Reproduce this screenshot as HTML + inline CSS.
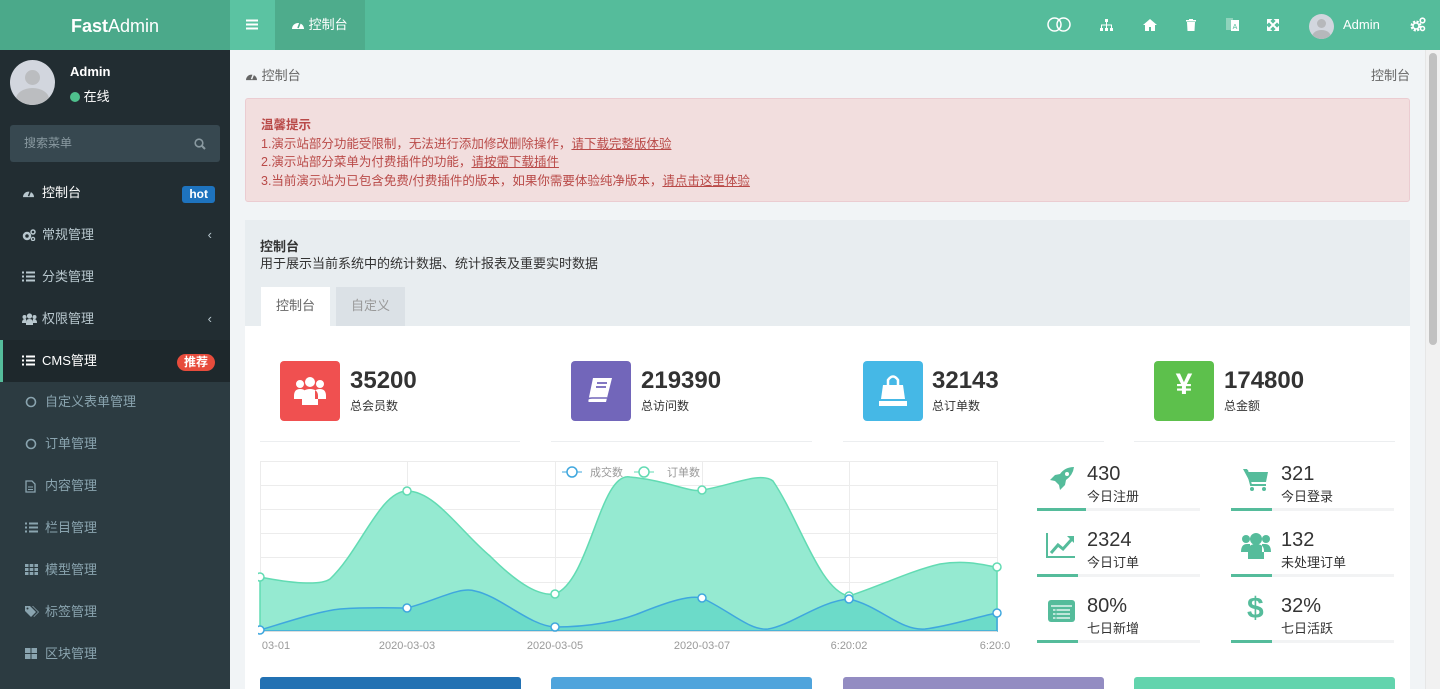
<!DOCTYPE html>
<html><head><meta charset="utf-8"><style>
*{margin:0;padding:0;box-sizing:border-box}
body{width:1440px;height:689px;overflow:hidden;background:#f1f4f6;font-family:"Liberation Sans","Noto Sans CJK SC",sans-serif;font-size:13px;color:#333;position:relative}
.a{position:absolute}
.hdr{left:0;top:0;width:1440px;height:50px;background:#55bc9b}
.logo{left:0;top:0;width:230px;height:50px;background:#4ba98a;color:#fff;font-size:18px;text-align:center;line-height:52px}
.side{left:0;top:50px;width:230px;height:639px;background:#222d32}
.sub{left:0;top:381px;width:230px;height:308px;background:#2c3b41}
.mi{position:absolute;left:0;width:230px;height:42px;line-height:42px;color:#b8c7ce;font-size:13px}
.mi svg{position:absolute;left:22px;top:15px}
.mi .t{position:absolute;left:42px}
.si{color:#8aa4af}
.si svg{left:25px}
.si .t{left:45px}
.badge{position:absolute;right:15px;top:13px;height:17px;line-height:17px;padding:0 7px;border-radius:3px;color:#fff;font-size:12px;font-weight:bold}
.card .n{position:absolute;font-size:24px;font-weight:bold;color:#333}
.card .l{position:absolute;font-size:12px;color:#333}
.box{position:absolute;width:60px;height:60px;border-radius:4px}
.ul{position:absolute;height:1px;background:#eceef0;top:441px}
.sm .n{position:absolute;font-size:20px;color:#333}
.sm .l{position:absolute;font-size:13px;color:#333}
.ln{position:absolute;height:3px;background:#f2f3f4;width:163px}
.ln i{display:block;height:3px;background:#55bc9b;width:49px}
</style></head><body>
<div class="a hdr"></div>
<div class="a logo"><b>Fast</b><span style="font-weight:300">Admin</span></div>
<div class="a" style="left:230px;top:0;width:45px;height:50px;background:#5bc3a2"><svg class="a" style="left:16px;top:19px" width="12" height="11"><path d="M0 1.5h12M0 5.5h12M0 9.5h12" stroke="#fff" stroke-width="2"/></svg></div>
<div class="a" style="left:275px;top:0;width:90px;height:50px;background:#4eac8c;color:#fff;line-height:50px;padding-left:16px;font-size:13px"><svg width="14" height="12" viewBox="0 0 14 12" style="vertical-align:-1px"><path d="M1 11 A6 6 0 1 1 13 11 Z" fill="#fff"/><path d="M7 10 L9 5" stroke="#4eac8c" stroke-width="1.6"/></svg> 控制台</div>
<!-- header icons -->
<svg class="a" style="left:1047px;top:17px" width="24" height="15"><circle cx="7.5" cy="7.5" r="6.5" fill="none" stroke="#fff" stroke-width="1.5"/><circle cx="16.5" cy="7.5" r="6.5" fill="none" stroke="#fff" stroke-width="1.5"/></svg>
<svg class="a" style="left:1100px;top:19px" width="13" height="12"><rect x="5" y="0" width="3" height="3" fill="#fff"/><rect x="0" y="9" width="3" height="3" fill="#fff"/><rect x="5" y="9" width="3" height="3" fill="#fff"/><rect x="10" y="9" width="3" height="3" fill="#fff"/><path d="M6.5 3v6M1.5 9V6h10v3" stroke="#fff" fill="none"/></svg>
<svg class="a" style="left:1143px;top:19px" width="14" height="12"><path d="M7 0L0 6h2v6h4V8h2v4h4V6h2z" fill="#fff"/></svg>
<svg class="a" style="left:1186px;top:19px" width="10" height="12"><path d="M0 1h10v1.5H0zM3 0h4v1H3zM1 3h8l-.5 9h-7z" fill="#fff"/></svg>
<svg class="a" style="left:1226px;top:18px" width="13" height="13"><rect x="0" y="0" width="7" height="12" fill="#8fd3bc"/><rect x="5" y="2" width="8" height="11" fill="#fff"/><text x="9" y="11" font-size="7" fill="#55bc9b" text-anchor="middle" font-family="Liberation Sans">A</text></svg>
<svg class="a" style="left:1267px;top:19px" width="12" height="12"><path d="M0 0h4L0 4zM12 0v4L8 0zM0 12V8l4 4zM12 12H8l4-4zM2 2l8 8M10 2l-8 8" stroke="#fff" stroke-width="2" fill="#fff"/></svg>
<div class="a" style="left:1309px;top:14px;width:25px;height:25px;border-radius:50%;background:#d2d6de;overflow:hidden"><div class="a" style="left:8px;top:5px;width:9px;height:9px;border-radius:50%;background:#b6b8bb"></div><div class="a" style="left:3px;top:16px;width:19px;height:14px;border-radius:50%;background:#b6b8bb"></div></div>
<div class="a" style="left:1343px;top:17px;color:#fff;font-size:13px">Admin</div>
<svg class="a" style="left:1410px;top:17px" width="16" height="15"><circle cx="6" cy="9" r="4" fill="none" stroke="#fff" stroke-width="3" stroke-dasharray="2 1.2"/><circle cx="6" cy="9" r="3" fill="none" stroke="#fff" stroke-width="1.5"/><circle cx="12.5" cy="3.5" r="2.3" fill="none" stroke="#fff" stroke-width="1.6"/><circle cx="12.5" cy="11.5" r="2" fill="none" stroke="#fff" stroke-width="1.5"/></svg>
<!-- sidebar -->
<div class="a side"></div>
<div class="a sub"></div>
<div class="a" style="left:10px;top:60px;width:45px;height:45px;border-radius:50%;background:#d2d6de;overflow:hidden"><div class="a" style="left:15px;top:10px;width:15px;height:15px;border-radius:50%;background:#bbbdc0"></div><div class="a" style="left:6px;top:28px;width:33px;height:22px;border-radius:50%;background:#bbbdc0"></div></div>
<div class="a" style="left:70px;top:64px;color:#fff;font-weight:bold;font-size:13px">Admin</div>
<div class="a" style="left:70px;top:86px;color:#fff;font-size:13px"><span style="display:inline-block;width:10px;height:10px;border-radius:50%;background:#4fc08d;vertical-align:-1px"></span> 在线</div>
<div class="a" style="left:10px;top:125px;width:210px;height:37px;background:#374850;border-radius:3px;color:#8a9aa1;line-height:37px;padding-left:14px;font-size:12px">搜索菜单<svg class="a" style="right:14px;top:13px" width="12" height="12"><circle cx="5" cy="5" r="3.8" fill="none" stroke="#8a9aa1" stroke-width="1.6"/><path d="M8 8l3 3" stroke="#8a9aa1" stroke-width="2"/></svg></div>
<div class="mi" style="top:172px"><svg width="13" height="11" viewBox="0 0 14 12"><path d="M1 11 A6 6 0 1 1 13 11 Z" fill="#b8c7ce"/><path d="M7 10 L9 5" stroke="#222d32" stroke-width="1.6"/></svg><span class="t" style="color:#fff">控制台</span><span class="badge" style="background:#1e73be;top:14px">hot</span></div>
<div class="mi" style="top:214px"><svg width="14" height="12"><circle cx="5" cy="7" r="3" fill="none" stroke="#b8c7ce" stroke-width="2.5"/><circle cx="11" cy="3" r="2" fill="none" stroke="#b8c7ce" stroke-width="1.5"/><circle cx="11" cy="10" r="1.6" fill="none" stroke="#b8c7ce" stroke-width="1.3"/></svg><span class="t">常规管理</span><span style="position:absolute;right:18px">‹</span></div>
<div class="mi" style="top:256px"><svg width="13" height="11"><path d="M0 1.5h2M4 1.5h9M0 5.5h2M4 5.5h9M0 9.5h2M4 9.5h9" stroke="#b8c7ce" stroke-width="2"/></svg><span class="t">分类管理</span></div>
<div class="mi" style="top:298px"><svg width="15" height="12"><circle cx="7.5" cy="3" r="2.6" fill="#b8c7ce"/><circle cx="2.5" cy="4" r="2" fill="#b8c7ce"/><circle cx="12.5" cy="4" r="2" fill="#b8c7ce"/><path d="M0 10q0-4 3-4h1v4zM15 10q0-4-3-4h-1v4zM4 12v-3q0-3 3.5-3t3.5 3v3z" fill="#b8c7ce"/></svg><span class="t">权限管理</span><span style="position:absolute;right:18px">‹</span></div>
<div class="mi" style="top:340px;background:#1e282c;border-left:3px solid #55bc9b;color:#fff"><svg width="13" height="11" style="left:19px"><path d="M0 1.5h2M4 1.5h9M0 5.5h2M4 5.5h9M0 9.5h2M4 9.5h9" stroke="#fff" stroke-width="2"/></svg><span class="t" style="left:39px">CMS管理</span><span class="badge" style="background:#e74c3c;border-radius:9px;top:14px">推荐</span></div>
<div class="mi si" style="top:381px"><svg width="12" height="12"><circle cx="6" cy="6" r="4.5" fill="none" stroke="#8aa4af" stroke-width="1.6"/></svg><span class="t">自定义表单管理</span></div>
<div class="mi si" style="top:423px"><svg width="12" height="12"><circle cx="6" cy="6" r="4.5" fill="none" stroke="#8aa4af" stroke-width="1.6"/></svg><span class="t">订单管理</span></div>
<div class="mi si" style="top:465px"><svg width="11" height="13"><path d="M1 1h6l3 3v8H1z" fill="none" stroke="#8aa4af" stroke-width="1.3"/><path d="M3 7h5M3 9.5h5" stroke="#8aa4af"/></svg><span class="t">内容管理</span></div>
<div class="mi si" style="top:507px"><svg width="13" height="11"><path d="M0 1.5h2M4 1.5h9M0 5.5h2M4 5.5h9M0 9.5h2M4 9.5h9" stroke="#8aa4af" stroke-width="2"/></svg><span class="t">栏目管理</span></div>
<div class="mi si" style="top:549px"><svg width="13" height="11"><path d="M0 0h3.5v3H0zM4.7 0h3.6v3H4.7zM9.5 0H13v3H9.5zM0 4h3.5v3H0zM4.7 4h3.6v3H4.7zM9.5 4H13v3H9.5zM0 8h3.5v3H0zM4.7 8h3.6v3H4.7zM9.5 8H13v3H9.5z" fill="#8aa4af"/></svg><span class="t">模型管理</span></div>
<div class="mi si" style="top:591px"><svg width="14" height="12"><path d="M0 0h5l6 6-5 5-6-6z" fill="#8aa4af"/><path d="M7 0h1l6 6-5 5-.5-.5L13 6z" fill="#8aa4af"/><circle cx="2.5" cy="2.5" r="1" fill="#2c3b41"/></svg><span class="t">标签管理</span></div>
<div class="mi si" style="top:633px"><svg width="12" height="11"><path d="M0 0h5.5v5H0zM6.5 0H12v5H6.5zM0 6h5.5v5H0zM6.5 6H12v5H6.5z" fill="#8aa4af"/></svg><span class="t">区块管理</span></div>
<!-- scrollbar -->
<div class="a" style="left:1425px;top:50px;width:15px;height:639px;background:#f1f1f1;border-left:1px solid #e6e6e6"></div>
<div class="a" style="left:1429px;top:53px;width:8px;height:292px;background:#c1c1c1;border-radius:4px"></div>
<!-- breadcrumb -->
<div class="a" style="left:245px;top:65px;color:#666;font-size:13px"><svg width="13" height="11" viewBox="0 0 14 12" style="vertical-align:-1px"><path d="M1 11 A6 6 0 1 1 13 11 Z" fill="#666"/><path d="M7 10 L9 5" stroke="#f1f4f6" stroke-width="1.6"/></svg> 控制台</div>
<div class="a" style="left:1371px;top:65px;color:#666;font-size:13px">控制台</div>
<!-- alert -->
<div class="a" style="left:245px;top:98px;width:1165px;height:104px;background:#f2dede;border:1px solid #ebccd1;border-radius:3px;color:#b94a48;padding:17px 15px;font-size:12.5px;line-height:18.5px">
<b>温馨提示</b><br>1.演示站部分功能受限制，无法进行添加修改删除操作，<u>请下载完整版体验</u><br>2.演示站部分菜单为付费插件的功能，<u>请按需下载插件</u><br>3.当前演示站为已包含免费/付费插件的版本，如果你需要体验纯净版本，<u>请点击这里体验</u></div>
<!-- panel -->
<div class="a" style="left:245px;top:220px;width:1165px;height:469px;background:#fff"></div>
<div class="a" style="left:245px;top:220px;width:1165px;height:106px;background:#e8edf0"></div>
<div class="a" style="left:260px;top:236px;font-weight:bold;font-size:13px">控制台</div>
<div class="a" style="left:260px;top:253px;font-size:13px">用于展示当前系统中的统计数据、统计报表及重要实时数据</div>
<div class="a" style="left:261px;top:287px;width:69px;height:39px;background:#fff;color:#666;text-align:center;line-height:38px">控制台</div>
<div class="a" style="left:336px;top:287px;width:69px;height:39px;background:#dbe1e6;color:#999;text-align:center;line-height:38px">自定义</div>
<!-- cards -->
<div class="card">
<div class="box" style="left:280px;top:361px;background:#f05050"></div>
<svg class="a" style="left:294px;top:376px" width="32" height="30"><circle cx="16" cy="6" r="5" fill="#fff"/><circle cx="6" cy="8" r="4" fill="#fff"/><circle cx="26" cy="8" r="4" fill="#fff"/><path d="M0 20q0-7 6-7q4 0 5 2v8H0zM32 20q0-7-6-7q-4 0-5 2v8h11zM8 29v-9q0-7 8-7t8 7v9z" fill="#fff"/></svg>
<div class="n" style="left:350px;top:367px">35200</div><div class="l" style="left:350px;top:397px">总会员数</div>
<div class="box" style="left:571px;top:361px;background:#7266ba"></div>
<svg class="a" style="left:586px;top:377px" width="30" height="28"><path d="M7 1h19l-6 24H2z" fill="#fff"/><path d="M2 25q-2-4 4-4h15" stroke="#7266ba" stroke-width="1.5" fill="none"/><path d="M11 6h10M10 10h10" stroke="#7266ba" stroke-width="1.8"/></svg>
<div class="n" style="left:641px;top:367px">219390</div><div class="l" style="left:641px;top:397px">总访问数</div>
<div class="box" style="left:863px;top:361px;background:#45b8e6"></div>
<svg class="a" style="left:877px;top:373px" width="32" height="34"><path d="M11 12V7q5-7 10 0v5" stroke="#fff" stroke-width="2.5" fill="none"/><path d="M6 12h20l2 14H4z" fill="#fff"/><rect x="2" y="28" width="28" height="5" fill="#fff"/></svg>
<div class="n" style="left:932px;top:367px">32143</div><div class="l" style="left:932px;top:397px">总订单数</div>
<div class="box" style="left:1154px;top:361px;background:#5dc04c"></div>
<div class="a" style="left:1154px;top:368px;width:60px;text-align:center;color:#fff;font-size:30px;font-weight:bold">¥</div>
<div class="n" style="left:1224px;top:367px">174800</div><div class="l" style="left:1224px;top:397px">总金额</div>
</div>
<div class="ul" style="left:260px;width:260px"></div><div class="ul" style="left:551px;width:261px"></div><div class="ul" style="left:843px;width:261px"></div><div class="ul" style="left:1134px;width:261px"></div>
<!-- chart -->
<svg class="a" style="left:258px;top:461px" width="752" height="195" font-family="Liberation Sans" font-size="11">
<g transform="translate(2,0)">
<g stroke="#ececec" stroke-width="1"><path d="M0 0.5H737M0 24.5H737M0 48.5H737M0 72.5H737M0 96.5H737M0 121.5H737M0 145.5H737"/><path d="M0.5 0V170M147.5 0V170M295.5 0V170M442.5 0V170M589.5 0V170M737.5 0V170"/></g>
<path d="M0,116 C30,122 60,125 70,118 C100,90 120,30 147,30 C175,30 200,70 230,95 C260,125 280,135 295,133 C330,120 340,10 370,16 C410,20 430,32 442,29 C470,25 500,10 513,20 C540,60 560,130 589,135 C620,125 650,110 680,103 C710,98 730,106 737,106 L737,170 L0,170 Z" fill="#95ead1" stroke="#62dbb3" stroke-width="1.5"/>
<path d="M0,169 C30,160 60,150 80,148 C110,146 130,147 147,147 C175,140 200,125 215,130 C240,135 270,165 295,166 C330,166 360,160 380,152 C410,140 430,134 442,137 C470,150 490,170 508,168 C530,165 560,140 589,138 C620,145 640,170 665,168 C690,165 720,155 737,152 L737,170 L0,170Z" fill="#6cdbc9" stroke="#3fa7de" stroke-width="1.5"/>
<path d="M0 170.5H737" stroke="#ddd"/>
<g fill="#fff" stroke="#62dbb3" stroke-width="1.5"><circle cx="0" cy="116" r="4"/><circle cx="147" cy="30" r="4"/><circle cx="295" cy="133" r="4"/><circle cx="442" cy="29" r="4"/><circle cx="589" cy="135" r="4"/><circle cx="737" cy="106" r="4"/></g>
<g fill="#fff" stroke="#3fa7de" stroke-width="1.5"><circle cx="0" cy="169" r="4"/><circle cx="147" cy="147" r="4"/><circle cx="295" cy="166" r="4"/><circle cx="442" cy="137" r="4"/><circle cx="589" cy="138" r="4"/><circle cx="737" cy="152" r="4"/></g>
<path d="M302 11h20" stroke="#3fa7de"/><circle cx="312" cy="11" r="5" fill="#fff" stroke="#3fa7de" stroke-width="1.5"/><text x="330" y="15" fill="#999" font-family="Liberation Sans, Noto Sans CJK SC">成交数</text>
<path d="M374 11h20" stroke="#62dbb3"/><circle cx="384" cy="11" r="5" fill="#fff" stroke="#62dbb3" stroke-width="1.5"/><text x="407" y="15" fill="#999" font-family="Liberation Sans, Noto Sans CJK SC">订单数</text>
<g fill="#999" text-anchor="middle"><text x="16" y="188">03-01</text><text x="147" y="188">2020-03-03</text><text x="295" y="188">2020-03-05</text><text x="442" y="188">2020-03-07</text><text x="589" y="188">6:20:02</text><text x="735" y="188">6:20:0</text></g>
</g></svg>
<!-- small stats -->
<div class="sm">
<div class="n" style="left:1087px;top:463px">430</div><div class="l" style="left:1087px;top:486px">今日注册</div>
<div class="n" style="left:1281px;top:463px">321</div><div class="l" style="left:1281px;top:486px">今日登录</div>
<div class="n" style="left:1087px;top:529px">2324</div><div class="l" style="left:1087px;top:552px">今日订单</div>
<div class="n" style="left:1281px;top:529px">132</div><div class="l" style="left:1281px;top:552px">未处理订单</div>
<div class="n" style="left:1087px;top:595px">80%</div><div class="l" style="left:1087px;top:618px">七日新增</div>
<div class="n" style="left:1281px;top:595px">32%</div><div class="l" style="left:1281px;top:618px">七日活跃</div>
</div>
<div class="ln" style="left:1037px;top:508px"><i></i></div><div class="ln" style="left:1231px;top:508px"><i style="width:41px"></i></div>
<div class="ln" style="left:1037px;top:574px"><i style="width:41px"></i></div><div class="ln" style="left:1231px;top:574px"><i style="width:41px"></i></div>
<div class="ln" style="left:1037px;top:640px"><i style="width:41px"></i></div><div class="ln" style="left:1231px;top:640px"><i style="width:41px"></i></div>
<svg class="a" style="left:1049px;top:466px" width="26" height="26"><path d="M25 1q-9 0-14 7l-5 1-5 5 5 1 4 4 1 5 5-5 1-5q7-5 8-13z" fill="#55bc9b"/><circle cx="18" cy="8" r="2" fill="#fff"/></svg>
<svg class="a" style="left:1243px;top:468px" width="26" height="24"><path d="M0 1h4l1 3h20l-2 10H7z" fill="#55bc9b"/><path d="M4 2l4 15h15" stroke="#55bc9b" stroke-width="2" fill="none"/><circle cx="9" cy="21" r="2" fill="#55bc9b"/><circle cx="21" cy="21" r="2" fill="#55bc9b"/></svg>
<svg class="a" style="left:1046px;top:533px" width="30" height="26"><path d="M1 0v24h28" stroke="#55bc9b" stroke-width="2" fill="none"/><path d="M5 20l7-8 5 4 9-10" stroke="#55bc9b" stroke-width="3" fill="none"/><path d="M21 3h7v7z" fill="#55bc9b"/></svg>
<svg class="a" style="left:1241px;top:532px" width="30" height="28"><circle cx="15" cy="7" r="6" fill="#55bc9b"/><circle cx="5" cy="7" r="4" fill="#55bc9b"/><circle cx="25" cy="7" r="4" fill="#55bc9b"/><path d="M0 20q0-8 6-8h3v8zM30 20q0-8-6-8h-3v8zM7 27v-8q0-7 8-7t8 7v8z" fill="#55bc9b"/></svg>
<svg class="a" style="left:1048px;top:600px" width="27" height="22"><rect x="0" y="0" width="27" height="22" rx="3" fill="#55bc9b"/><path d="M3 6h21M5 10h17M5 14h17M5 18h17" stroke="#fff" stroke-width="1.3"/><path d="M8 8v12" stroke="#55bc9b" stroke-width="1"/></svg>
<div class="a" style="left:1247px;top:592px;color:#55bc9b;font-size:30px;font-weight:bold">$</div>
<!-- bottom boxes -->
<div class="a" style="left:260px;top:677px;width:261px;height:12px;background:#2271b3;border-radius:3px 3px 0 0"></div>
<div class="a" style="left:551px;top:677px;width:261px;height:12px;background:#4fa4dc;border-radius:3px 3px 0 0"></div>
<div class="a" style="left:843px;top:677px;width:261px;height:12px;background:#938cc2;border-radius:3px 3px 0 0"></div>
<div class="a" style="left:1134px;top:677px;width:261px;height:12px;background:#62d4ad;border-radius:3px 3px 0 0"></div>
</body></html>
